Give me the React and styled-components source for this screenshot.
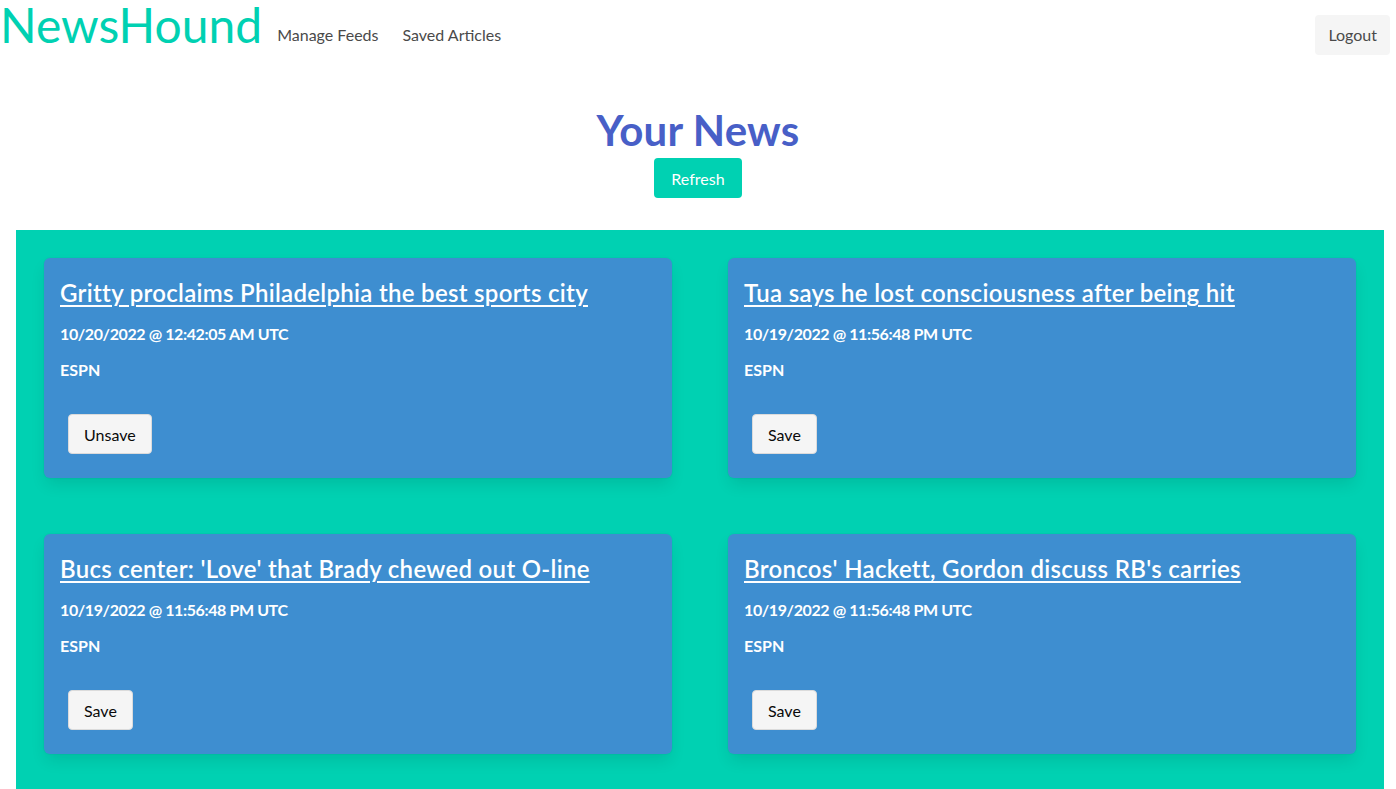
import React from "react";
import styled, { createGlobalStyle } from "styled-components";

const Global = createGlobalStyle`
  html, body { margin: 0; padding: 0; background: #fff; }
  body { font-family: Lato, "Noto Sans", sans-serif; color: #4a4a4a; font-size: 16px; }
  * { box-sizing: border-box; }
`;

const Nav = styled.nav`
  display: flex;
  align-items: center;
  height: 70px;
`;

const Logo = styled.a`
  align-self: flex-start;
  font-size: 48px;
  line-height: 1;
  color: #00d1b2;
  text-decoration: none;
  margin-right: 3px;
  padding-top: 1px;
`;

const NavLink = styled.a`
  color: #4a4a4a;
  font-size: 16px;
  padding: 0 12px;
  text-decoration: none;
  margin-top: -2px;
`;

const Spacer = styled.div`
  flex: 1;
`;

const Button = styled.button`
  font-family: inherit;
  font-size: 16px;
  height: 40px;
  padding: 0 ${(p) => p.$px || 15}px;
  border-radius: 4px;
  border: 1px solid ${(p) => (p.$variant ? "transparent" : "#dbdbdb")};
  background: ${(p) => (p.$variant === "primary" ? "#00d1b2" : "#f5f5f5")};
  color: ${(p) => (p.$variant === "primary" ? "#fff" : p.$variant === "light" ? "#4a4a4a" : "#0a0a0a")};
  cursor: pointer;
`;

const LogoutWrap = styled.div`
  padding-right: 6px;
  margin-top: -1px;
`;

const Header = styled.header`
  display: flex;
  flex-direction: column;
  align-items: center;
  padding-top: 35px;
  gap: 3px;
`;

const Title = styled.h1`
  margin: 0;
  font-size: 42px;
  font-weight: 700;
  color: #485fc7;
  line-height: 1.2;
  letter-spacing: 0.2px;
`;

const Section = styled.section`
  margin: 32px 12px 0 16px;
  background: #00d1b2;
  padding: 28px 28px 60px;
  display: grid;
  grid-template-columns: 1fr 1fr;
  column-gap: 56px;
  row-gap: 56px;
`;

const Card = styled.article`
  background: #3e8ed0;
  border-radius: 6px;
  box-shadow: 0 8px 16px -2px rgba(10, 10, 10, 0.1), 0 0 0 1px rgba(10, 10, 10, 0.02);
  padding: 19px 16px 24px;
  height: 220px;
  color: #fff;
  display: flex;
  flex-direction: column;
  align-items: flex-start;
`;

const CardTitle = styled.a`
  font-size: 24px;
  font-weight: 600;
  color: #fff;
  text-decoration: underline;
  text-underline-offset: 3px;
  line-height: 32px;
  letter-spacing: 0.3px;
`;

const Meta = styled.p`
  margin: ${(p) => p.$mt}px 0 0;
  font-weight: 700;
  font-size: 16px;
  line-height: 24px;
  letter-spacing: ${(p) => p.$ls || 0}px;
`;

const CardButton = styled(Button)`
  margin: 32px 0 0 8px;
`;

const articles = [
  { title: "Gritty proclaims Philadelphia the best sports city", date: "10/20/2022 @ 12:42:05 AM UTC", saved: true },
  { title: "Tua says he lost consciousness after being hit", date: "10/19/2022 @ 11:56:48 PM UTC" },
  { title: "Bucs center: 'Love' that Brady chewed out O-line", date: "10/19/2022 @ 11:56:48 PM UTC" },
  { title: "Broncos' Hackett, Gordon discuss RB's carries", date: "10/19/2022 @ 11:56:48 PM UTC" },
];

export default function App() {
  return (
    <>
      <Global />
      <Nav>
        <Logo href="#">NewsHound</Logo>
        <NavLink href="#">Manage Feeds</NavLink>
        <NavLink href="#">Saved Articles</NavLink>
        <Spacer />
        <LogoutWrap>
          <Button $variant="light" $px={12}>Logout</Button>
        </LogoutWrap>
      </Nav>
      <Header>
        <Title>Your News</Title>
        <Button $variant="primary" $px={16}>Refresh</Button>
      </Header>
      <Section>
        {articles.map((a) => (
          <Card key={a.title}>
            <CardTitle href="#">{a.title}</CardTitle>
            <Meta $mt={13} $ls={-0.4}>{a.date}</Meta>
            <Meta $mt={12}>ESPN</Meta>
            <CardButton>{a.saved ? "Unsave" : "Save"}</CardButton>
          </Card>
        ))}
      </Section>
    </>
  );
}
